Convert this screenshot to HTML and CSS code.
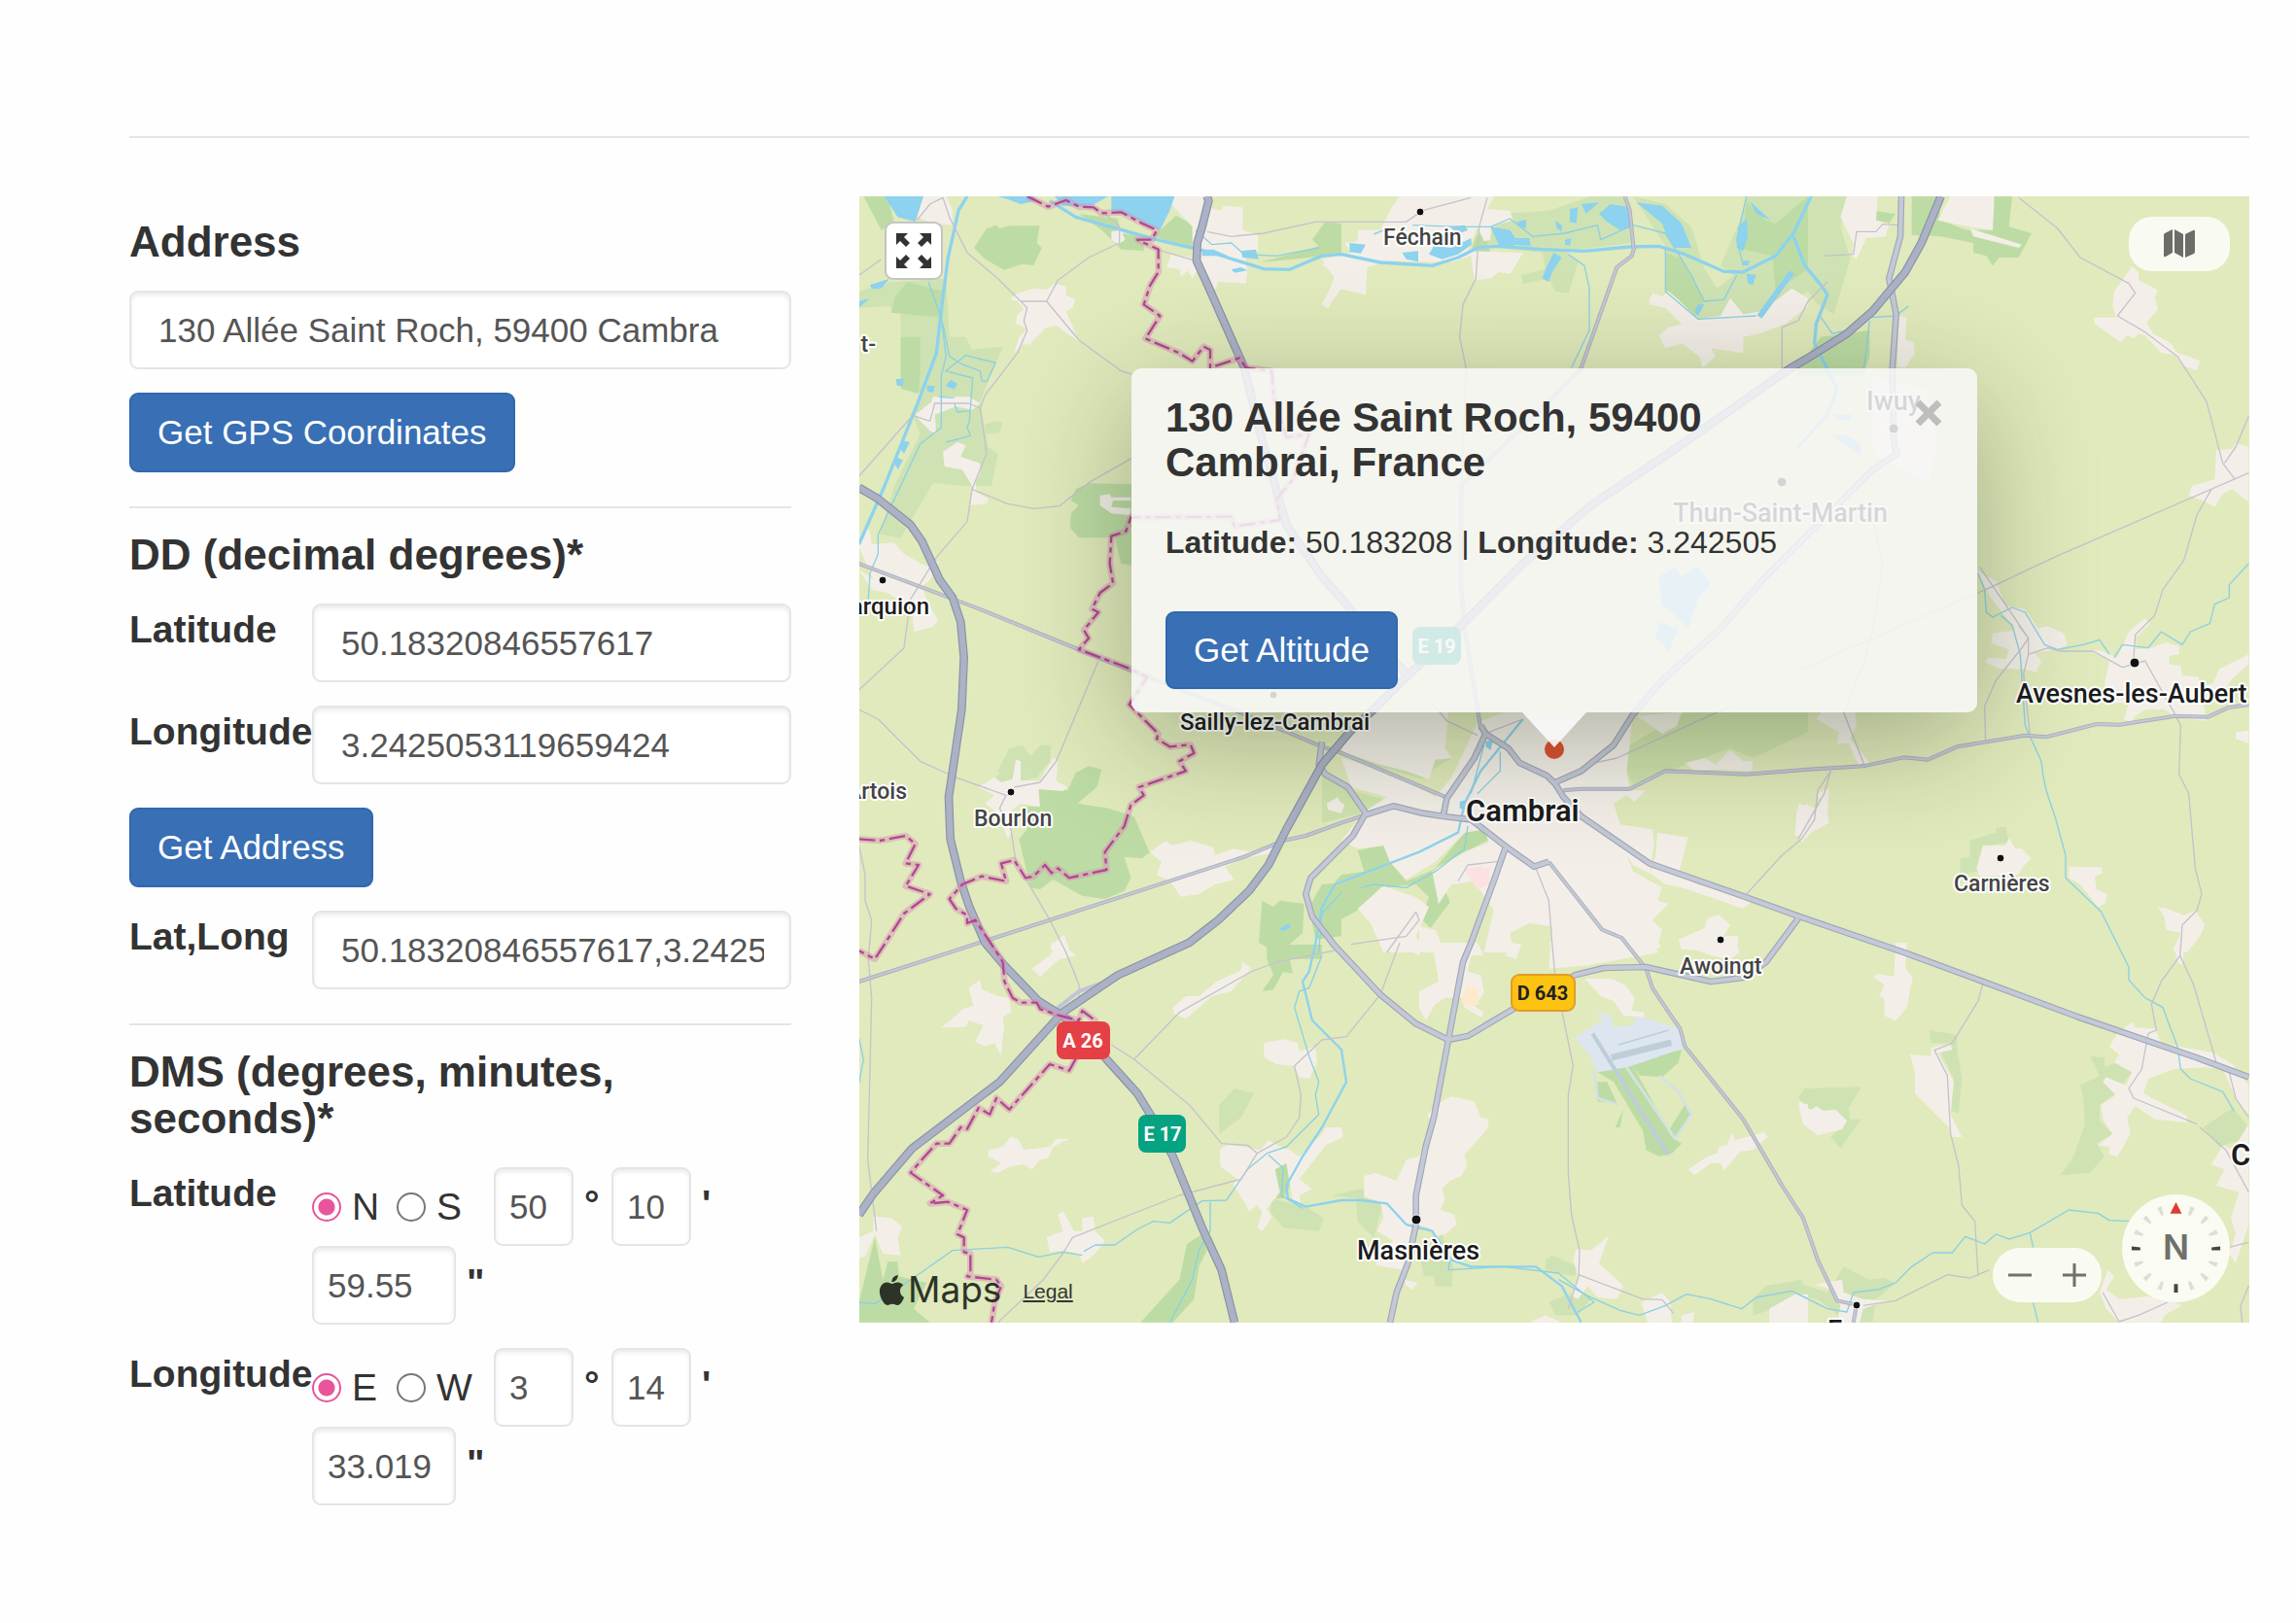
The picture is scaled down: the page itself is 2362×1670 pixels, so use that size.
FILE: index.html
```html
<!DOCTYPE html>
<html lang="en">
<head>
<meta charset="utf-8">
<title>GPS Coordinates</title>
<meta name="viewport" content="width=device-width, initial-scale=1">
<link rel="stylesheet" href="styles.css">
</head>
<body>
<main class="page">
  <hr class="rule">
  <div class="columns">
    <form class="panel">
      <section class="group">
        <h2 class="heading"><label for="address">Address</label></h2>
        <input class="field" id="address" type="text" value="130 Allée Saint Roch, 59400 Cambra">
        <button class="btn" type="button">Get GPS Coordinates</button>
      </section>
      <hr class="rule">
      <section class="group">
        <h2 class="heading">DD (decimal degrees)*</h2>
        <div class="row">
          <label class="name" for="latitude">Latitude</label>
          <input class="field" id="latitude" type="text" value="50.18320846557617">
        </div>
        <div class="row">
          <label class="name" for="longitude">Longitude</label>
          <input class="field" id="longitude" type="text" value="3.2425053119659424">
        </div>
        <button class="btn" type="button">Get Address</button>
        <div class="row">
          <label class="name" for="latlong">Lat,Long</label>
          <input class="field" id="latlong" type="text" value="50.18320846557617,3.2425">
        </div>
      </section>
      <hr class="rule">
      <section class="group">
        <h2 class="heading">DMS (degrees, minutes, seconds)*</h2>
        <div class="row">
          <label class="name" for="lat-deg">Latitude</label>
          <div class="dms">
            <label class="choice"><input class="radio" type="radio" name="ns" checked>N</label>
            <label class="choice"><input class="radio" type="radio" name="ns">S</label>
            <input class="field small" id="lat-deg" type="text" value="50"><label class="unit" for="lat-deg">°</label>
            <input class="field small" id="lat-min" type="text" value="10"><label class="unit" for="lat-min">'</label>
            <input class="field small seconds" id="lat-sec" type="text" value="59.55"><label class="unit" for="lat-sec">"</label>
          </div>
        </div>
        <div class="row">
          <label class="name" for="lon-deg">Longitude</label>
          <div class="dms">
            <label class="choice"><input class="radio" type="radio" name="ew" checked>E</label>
            <label class="choice"><input class="radio" type="radio" name="ew">W</label>
            <input class="field small" id="lon-deg" type="text" value="3"><label class="unit" for="lon-deg">°</label>
            <input class="field small" id="lon-min" type="text" value="14"><label class="unit" for="lon-min">'</label>
            <input class="field small seconds" id="lon-sec" type="text" value="33.019"><label class="unit" for="lon-sec">"</label>
          </div>
        </div>
      </section>
    </form>

    <div class="map">
      <svg class="tiles" viewBox="884 202 1430 1159" role="img" aria-label="Map of Cambrai and its surroundings">
        <g transform="translate(880 200) scale(.333333)">
          <!-- light woodland -->
          <g class="wood">
            <path d="M11 300L110 270 280 260 290 440 340 440 360 480 455 470 400 600 385 640 410 780 440 800 420 900 330 900 240 890 140 1060 75 1050 120 900 200 740 180 690 200 610 140 590 140 370 100 345 11 350zM400 710L430 700 455 705 445 735 405 740z"/>
            <g transform="translate(1440 0)"><path d="M500 160L560 60 700 50 830 6 940 6 960 150 750 175 790 210 760 305 720 300 700 260 620 275 615 250 690 230 680 180zM960 6L1060 30 1140 100 1180 230 1220 290 1270 250 1230 220 1290 80 1310 6 1500 6 1500 300 1350 380 1230 375 1160 390 1060 300 1060 160z"/></g>
            <g transform="translate(2910 0)"><path d="M0 6H150L130 100 160 200 110 370 60 340 0 260z"/></g>
            <g transform="translate(0 1140)"><path d="M440 640L475 570 515 560 540 595 570 560 605 560 600 610 560 660 470 680zM430 660L470 630 490 670 440 680z"/></g>
            <g transform="translate(2910 1140)"><path d="M500 910L530 905 530 855 610 830 610 815 640 812 650 860 580 870 550 950 500 960z"/></g>
            <g transform="translate(0 2310)"><path d="M1123 502L1170 450 1230 465 1190 540 1123 590zM1285 790L1400 820 1445 850 1430 890 1320 880 1280 830z"/></g>
            <g transform="translate(1440 2310)"><path d="M30 780L120 760 190 800 160 910 110 860 105 790zM300 960L370 900 405 1000 400 1062 350 1060 345 1030 315 1030zM690 980L710 965 790 1000 780 1030 690 1010zM700 1110L800 1070 830 1100 790 1150 720 1150zM1330 1100L1370 1060 1480 1040 1500 1100 1330 1150z"/></g>
            <g transform="translate(2910 2310)"><path d="M0 480L20 450 195 445 155 510 160 545 195 545 130 635 100 600 150 550 110 515 40 520zM405 270L490 285 490 330 505 420 495 525 470 520 480 420 440 340 470 310 410 310zM900 350L945 355 945 385 980 370 1030 400 1000 435 950 420 980 465 930 500 930 550 970 590 920 620 945 660 900 710 810 718 850 660 885 560 880 480 870 440 930 410zM1250 570L1340 510 1390 570 1390 600 1300 630zM0 1050L90 1080 140 1000 220 1040 265 1035 300 1050 240 1100 230 1170 150 1172 60 1100 0 1090z"/></g>
          </g>
          <!-- dense forest -->
          <g class="forest">
            <path d="M25 6H100L120 90 80 110zM405 105L435 95 445 105 480 97 568 97 560 150 575 165 550 220 515 215 460 233 400 200 366 165zM120 320L160 270 275 300 270 380 110 365zM140 440H200V550L195 615 140 600zM690 60L810 75 820 120 890 130 890 175 820 170 760 110zM990 65L1060 105 1060 170 920 130zM680 910L720 892 852 895 852 1145 820 1140 800 1060 690 1060 663 1030 665 985 690 960 665 945zM1410 140L1450 85 1500 90 1500 185 1250 210 1430 160z"/>
            <g transform="translate(1440 0)"><path d="M1300 120L1310 20 1370 80 1400 90 1500 6 1500 230 1400 300 1390 190 1300 170zM1060 180L1110 200 1180 330 1150 380 1060 290zM475 130L500 110 520 180 460 175z"/></g>
            <g transform="translate(2910 0)"><path d="M350 6H430L440 80 520 110 600 110 600 6H660L650 100 720 120 680 195 620 195 600 220 580 190 540 180 540 150 440 130 350 125zM230 50L300 60 280 90 235 80zM0 530L70 440 220 420 220 500 200 560 0 560z"/></g>
            <g transform="translate(0 1140)"><path d="M566 697L655 700 680 645 720 625 760 635 745 690 685 740 780 755 860 780 908 892 885 910 830 905 850 970 830 1010 770 1035 700 1025 610 975 570 1005 540 1000 505 850 530 820 520 750 565 750zM1255 1040L1290 1060 1310 1040 1385 1050 1380 1140 1300 1210 1280 1190 1245 1170zM1440 990L1500 985 1500 1150 1420 1160 1400 1060z"/></g>
            <g transform="translate(1440 1140)"><path d="M110 885L190 870 210 920 260 980 345 945 440 830 500 820 520 850 440 890 350 940 395 1045 335 1125 305 1095 330 1030 290 990 180 1000 110 1070 0 1130 0 1030 60 960 130 950zM640 850L660 800 690 797 715 830 740 845 720 870 735 890 695 915 650 880z"/><path d="M90 540L190 458 330 458 320 580 400 600 350 630 310 665 90 600zM780 500L880 460 860 510 830 525zM0 650L60 690 90 700 200 730 120 770 0 800zM950 560L1120 458 1500 458 1500 520 1330 600 1260 570 1120 620 1050 650 960 680 940 640z" class="faint"/></g>
            <g transform="translate(0 2310)"><path d="M1270 6L1440 6 1440 50 1340 50 1350 95 1320 90 1290 145 1255 150 1290 100 1270 50zM1023 930L1070 900 1085 950 1060 1000 1045 1100 980 1172 880 1172 1000 1040zM60 910L85 1040 100 985 130 985 135 1030 220 1050 180 1130 230 1172 11 1172 11 1110zM1295 700L1330 680 1360 720 1320 790 1300 790z"/></g>
            <g transform="translate(1440 2310)"><path d="M890 390L1110 330 1100 370 1050 415 980 410 960 380 1080 600 1110 620 1080 650 1040 660 1000 640 990 580 900 430 850 400zM850 430L880 430 910 495 850 490zM1120 500L1140 530 1090 600 1070 580zM905 570L930 515 920 570z"/></g>
          </g>
          <!-- built-up areas -->
          <g class="town">
            <path d="M190 6H280L300 50 300 95 240 90 190 70zM500 330L480 325 490 310 550 290 590 295 615 275 650 285 650 310 678 325 670 350 650 360 685 440 690 455 620 405 590 410 545 455 540 465 520 460 490 490 505 440 530 415 495 400 500 370 520 355zM985 6H1075L1085 40 1130 50 1135 35 1195 40 1195 110 1243 125 1243 175 1200 170 1210 235 1205 275 1120 270 1110 295 1060 220 1040 260 1025 235 1005 255 1000 230 960 225 975 185 1040 195 1040 100 975 30zM790 115L820 110 832 140 810 155 790 140zM1440 200L1500 185 1500 290 1455 350 1440 340 1480 260zM185 680L235 640 240 625 350 625 385 645 360 665 310 655 245 680 250 740 230 730 200 700zM270 795L315 765 340 775 325 810 385 830 385 860 370 890 375 920 410 940 405 955 355 960 360 900 330 850 275 840zM11 1090L30 1030 45 1040 50 1080 120 1075 150 1110 220 1150 260 1130 230 1190 180 1230 60 1200zM755 930L785 925 790 935 850 935 850 945 795 945 790 965 850 970 845 990 790 985 755 960z"/>
            <g transform="translate(1440 0)"><path d="M215 40L240 6 530 6 510 45 580 50 590 80 520 100 520 140 500 145 480 100 450 175 620 180 600 215 580 245 545 240 520 260 470 265 460 190 400 210 200 205 170 215 140 225 135 310 50 290 20 350 5 345 40 250 0 215 90 180 70 150 110 145 110 110 180 110zM1010 325L1020 305 1050 315 1070 300 1100 325 1160 385 1230 375 1260 320 1300 370 1360 360 1450 290 1500 320 1500 345 1430 400 1350 430 1300 440 1300 490 1200 475 1215 500 1175 535 1165 500 1110 460 1060 475 1040 435 1070 410 1110 400 1060 350 1010 340z"/></g>
            <g transform="translate(2910 0)"><path d="M150 6H245L240 80 280 90 270 130 210 135 180 200 165 190 170 150 130 70zM430 80L470 6 605 6 600 110 530 100 480 90zM530 105L690 155 680 165 540 130zM310 375L335 380 330 450 355 455 360 490 330 535 305 530zM975 300L1000 265 1030 222 1050 240 1050 265 1110 295 1100 320 1110 355 1075 395 1095 430 1150 460 1170 490 1205 500 1240 515 1230 543 1190 530 1160 495 1120 490 1070 435 1050 430 1035 445 1015 435 995 457 915 400 912 380 980 380 970 340zM1290 790L1340 785 1350 768 1390 780 1390 950 1340 910 1310 925 1285 965 1250 945 1205 930 1215 900 1285 880zM0 6z"/></g>
            <path d="M3140 560L3300 600 3340 760 3310 890 3230 850 3140 800z"/>
            <g transform="translate(0 1140)"><path d="M11 20L60 50 100 20 200 0 230 10 200 60 220 110 255 175 240 195 180 210 175 140 100 90 50 80zM380 690L430 660 450 675 485 665 495 605 510 610 510 670 570 670 610 598 625 610 620 670 655 690 640 702 565 695 570 750 510 740 470 770 480 830 470 850 440 770 400 740 430 715zM908 890L960 855 975 870 1035 855 1105 875 1110 900 1165 880 1225 890 1290 870 1280 895 1200 910 1140 935 1170 975 1110 990 1060 1020 1005 1028 970 980 930 960 945 920zM1455 740L1490 720 1500 770 1460 760zM600 1180L645 1145 660 1200 610 1200z"/></g>
            <g transform="translate(1440 1140)"><path d="M140 458L390 458 380 570 400 600 350 605 330 665 260 640 180 620 90 590 60 580 80 530zM480 490L560 460 960 458 940 640 950 700 1000 700 965 735 940 715 900 740 920 805 1020 820 1025 860 1010 960 1030 900 1035 830 1130 845 1100 960 1160 990 1310 1030 1330 1040 1300 1065 1200 1030 1110 1000 1060 990 1020 960 960 930 940 900 960 950 1050 1000 1035 1040 1070 1050 1020 1100 1050 1130 1030 1190 1040 1200 820 1240 700 1250 710 1120 640 1110 580 1140 590 1200 500 1200 530 1070 470 980 400 990 360 1050 340 950 440 890 515 860 500 820 440 830 350 920 260 975 210 920 190 870 110 880 60 855 110 790 140 760 200 720 90 690 60 600 200 640 350 720 400 660zM970 470L1110 458 1095 500 1050 525 1000 490zM1120 615L1180 600 1215 620 1260 575 1300 610 1330 610 1325 640 1200 635 1150 640zM15 745L45 725 70 745 60 770 20 760zM110 1065L190 995 290 1030 330 1060 290 1150 320 1200 190 1200 150 1110zM300 1120L350 1130 380 1200 300 1200zM1465 760L1500 740 1500 840 1460 840zM1100 1160L1180 1125 1190 1095 1225 1083 1260 1115 1240 1150 1285 1150 1280 1200 1110 1190z"/></g>
            <g transform="translate(2910 1140)"><path d="M550 20L610 55 640 130 700 140 740 200 770 193 820 215 830 250 800 265 730 275 750 300 735 335 690 325 620 325 580 305 585 290 640 295 650 265 595 245 600 215 670 205 590 100zM55 480L70 458 175 458 180 500 160 540 220 615 185 620 155 555 120 555 125 520zM945 370L960 300 895 265 940 270 985 290 1020 210 1070 168 1085 185 1040 230 1045 265 1090 260 1135 243 1175 255 1175 280 1145 285 1145 310 1180 315 1185 345 1235 350 1240 380 1280 370 1300 325 1390 280 1390 310 1340 355 1310 400 1250 430 1260 485 1170 475 1130 450 1070 450 1040 470 1025 490 1005 480 1020 430 960 430zM55 710L95 695 90 770 95 800 40 830 10 860 0 840V740L60 755 70 730zM550 940L570 870 640 870 650 847 670 880 690 880 718 910 690 940 680 960 560 965zM835 935L935 937 940 955 915 965 920 1005 955 1020 945 1050 925 1060 870 990 835 970zM1110 1060L1140 1065 1190 1085 1225 1070 1255 1115 1240 1150 1200 1200 1155 1195 1180 1140 1135 1130 1130 1090zM1350 520L1390 515 1390 555 1350 540z"/></g>
            <g transform="translate(0 2310)"><path d="M545 80L600 40 620 10 600 0 655 0 660 25 685 40 630 50 570 105zM350 140L385 115 390 145 440 165 475 170 480 215 455 230 460 260 455 290 450 350 430 310 400 320 370 305 395 255 350 240 340 260 265 262 310 225 330 205 365 195zM980 200L1020 165 1060 165 1115 120 1190 85 1195 60 1222 78 1160 150 1100 165 1060 200 1020 235 985 220zM1260 310L1325 298 1365 310 1370 335 1420 320 1425 370 1400 420 1370 415 1355 380 1300 375 1262 355zM410 640L455 630 480 598 505 610 520 640 600 630 620 605 660 605 610 630 595 665 570 670 545 700 520 685 480 690 440 710 415 705 450 680 410 660zM1125 640L1145 625 1200 630 1250 640 1275 610 1300 625 1340 640 1370 660 1440 590 1450 570 1500 570 1500 600 1455 620 1370 730 1410 760 1370 780 1375 805 1350 800 1340 740 1330 680 1295 700 1310 770 1270 820 1285 850 1255 890 1240 880 1255 830 1240 810 1215 830 1200 800 1165 745 1180 730 1125 690zM590 910L640 890 625 840 640 828 675 890 700 890 700 850 735 845 740 890 770 920 740 960 700 990 690 960 640 950 600 955zM11 910L55 890 55 845 110 850 145 875 130 910 140 965 85 960 60 900 30 970 11 975z"/></g>
            <g transform="translate(1440 2310)"><path d="M230 0H310L300 40zM340 0H480L500 40 460 40 450 90 490 100 500 155 470 195 500 215 490 230 440 200 430 170 380 170 350 190 320 240 300 200 300 150 360 120zM565 40L585 0 615 5 600 50zM700 0H790L780 40 730 30zM940 0H1040L1045 15 980 35zM1100 0L1280 10 1290 30 1260 50 1200 40zM810 110L890 110 935 130 965 170 955 210 995 215 995 230 930 225 900 180 860 165zM370 490L400 475 470 490 490 540 515 545 510 575 470 620 440 655 448 690 430 720 395 735 370 760 380 790 365 825 410 840 415 870 380 900 350 905 330 880 290 870 250 1010 165 995 180 960 220 920 170 890 190 850 180 800 130 785 130 720 165 710 230 735 260 670 300 660 340 560 325 530zM255 1040L295 1050 280 1070 260 1060zM1130 700L1190 660 1220 650 1225 630 1250 625 1265 585 1275 610 1365 585 1375 600 1330 640 1290 645 1240 705 1230 680 1200 680 1150 718zM785 945L830 950 885 905 855 990 900 1030 930 1060 910 1100 850 1095 820 1060 790 1100 770 1090 790 1030 775 980zM985 1110L1050 1080 1075 1110 1080 1172 1005 1172zM640 1172L690 1150 740 1172zM1380 1130L1460 1085 1500 1085 1500 1172 1380 1172zM1470 490L1500 500V560zM1110 1150L1150 1140 1145 1172H1110zM0 590L60 570 65 600 0 630z"/></g>
            <g transform="translate(2910 2310)"><path d="M300 0H335L330 80 353 105 335 200 300 242 265 225 265 170 250 165 265 130 230 105 245 97 295 105zM345 345L410 350 410 325 470 312 475 330 430 340 480 430 470 530 505 600 475 600 465 570 360 465 360 400zM0 500L40 515 55 505 80 520 115 515 150 550 135 575 60 595 15 560zM960 320L985 280 1030 245 1040 262 1100 265 1120 310 1280 340 1340 375 1390 440 1390 530 1350 480 1310 390 1250 385 1160 390 1080 420 1065 465 1200 535 1200 555 1100 545 1040 505 1015 540 1025 590 985 660 960 655 960 630 925 625 970 590 940 545 935 500 980 470 940 430 950 415 1010 440 1030 400 975 370 990 345zM1275 685L1310 625 1340 640 1390 560 1390 870 1350 990 1330 960 1350 900 1335 850 1360 770 1290 750 1315 700zM1160 15L1185 0 1215 0 1190 30 1185 70 1170 60zM930 1080L955 1010 975 1030 950 1070 990 1100 1100 1090 1185 1120 1130 1150 1120 1172H990L950 1130zM50 1055L135 1040 140 1080 200 1100 275 1105 200 1130 190 1172H120L130 1120 100 1070zM0 1090L30 1110 20 1172H0z"/></g>
          </g>
          <path class="ward" d="M1880 2085L1910 2075 1960 2080 1955 2130 1920 2145 1900 2115z"/>
          <path class="ward warm" d="M1885 2445L1920 2450 1925 2500 1890 2510 1870 2490z"/>
          <!-- airfield -->
          <g transform="translate(1440 2310)">
            <path class="apron" d="M780 295L830 260 870 240 840 210 890 225 900 260 960 255 970 225 1100 265 1115 325 1000 365 940 385 850 400 830 350z"/>
            <path class="strip" d="M840 390L850 480 915 500M1040 410L1100 460 1140 530 1090 605 940 385"/>
            <path class="runway" d="M893 355L1078 308" stroke-width="20"/>
            <path class="runway" d="M835 280L1068 655" stroke-width="12"/>
            <path class="runway" d="M915 315L1070 270" stroke-width="4"/>
          </g>
          <!-- lakes -->
          <g class="lake">
            <path d="M110 6H210L185 85 130 70 90 6zM45 280L105 260 80 290 50 292zM11 330L45 320 11 350zM125 570L150 570 145 592 128 590zM220 590L245 592 240 612 222 608zM278 590L295 572 315 585 305 602zM145 760L168 765 150 800 138 785zM128 812L146 820 132 850 120 830zM440 6H550L560 20 510 30 470 15zM615 6H780L720 40 640 35zM790 6H985L970 50 940 110 850 70 790 50zM1070 170L1105 170 1150 190 1070 190zM1190 175L1235 170 1245 200 1195 195zM1160 232L1190 225 1210 235 1170 242z"/>
            <g transform="translate(1440 0)"><path d="M85 150L135 155 120 182 85 178zM160 120L180 112 210 104 160 126zM395 100L440 95 450 110 420 122zM370 200L330 185 345 160 400 165 460 135 462 155 420 185zM247 180L297 175 297 208 260 200zM520 100L580 110 600 140 590 160 545 155zM600 85L630 78 630 105 610 100zM590 135L640 135 645 160 590 155zM720 80L740 95 740 115 725 105zM765 45L790 40 785 90 765 85zM800 30L855 25 815 60zM855 60L890 30 950 40 960 100 920 110 880 85zM970 25L1050 35 1110 90 1140 165 1090 165 1065 130 1050 90zM690 230L715 180 740 195 710 240 700 270 680 260zM750 140L770 135 765 158 750 155zM1285 100L1310 75 1315 130 1300 175 1280 165zM1320 20L1385 80 1340 60zM1310 245L1340 248 1330 280 1315 275zM1300 205L1320 205 1315 220 1298 218zM1160 340L1180 340 1160 375 1150 360z"/></g>
            <path d="M3020 680H3075L3065 697 3030 693zM3010 740L3060 745 3100 770 3105 810 3080 790zM2480 1180L2530 1150 2550 1180 2600 1150 2640 1200 2600 1250 2570 1340 2530 1300 2490 1270zM2480 1320L2540 1340 2510 1410 2470 1370zM1310 2265L1340 2250 1343 2265 1315 2275zM1945 1690L1970 1680 1960 1715 1945 1705zM1865 1875L1880 1870 1880 1900 1865 1895z"/>
          </g>
          <!-- rivers and streams -->
          <g class="river">
            <path d="M345 6L318 50 285 200 260 400 250 490 190 650 90 900 11 1080"/>
            <path d="M600 20L680 70 930 140 1100 180 1260 230 1340 232 1440 190 1500 185 1620 210 1780 220 1860 195 1920 165 1980 160 2120 170 2250 175 2390 162 2480 160 2560 185 2680 238 2740 240 2840 190 2895 120 2950 6"/>
            <path d="M2895 130L2930 220 2980 280 3000 310 2965 400 2960 460 3030 600 3000 680 2910 780"/>
            <path d="M2790 378L2890 240" stroke-width="18"/>
          </g>
          <g class="canal">
            <path d="M2060 1620L1930 1780 1880 1880 1860 1970 1740 2030 1480 2130 1440 2200 1420 2310 1400 2400 1380 2430 1410 2550 1500 2640 1515 2740 1440 2880 1380 2970 1330 3060 1335 3100 1390 3125 1500 3105 1560 3105 1640 3115 1700 3180 1780 3200 1840 3290 1900 3310 2100 3310 2180 3370 2240 3482"/>
          </g>
          <g class="stream">
            <path d="M225 270L265 380 280 500 265 560 265 720 200 770 130 920 70 1050 70 1110 45 1170 40 1250"/>
            <path d="M270 400L290 500 330 525 385 545 390 575 405 578 433 520 340 497 278 545 362 567 352 700 345 720 355 745 280 765M258 625L305 628M305 645L315 672 355 668"/>
            <path d="M1050 110L1100 155 1160 150 1200 185 1300 190 1430 165M1720 95L1860 100 1960 100 2020 75 2090 130 2190 120 2290 95 2300 140 2400 95 2500 120 2580 250 2620 330 2680 325 2720 250M2500 170L2500 300 2600 385 2780 375M2200 185L2250 220 2265 290 2265 420 2210 535"/>
            <path d="M2740 220L2720 140 2750 6M3015 430L2980 380M3015 430L3060 420M3130 380L3210 375 3250 345M3130 390L3120 480 3110 550"/>
            <path d="M3465 1170L3485 1220 3490 1290 3510 1305 3570 1275 3610 1290 3670 1390 3710 1405 3790 1390 3840 1375 3870 1420M3885 1430L3910 1390 3990 1400 4030 1350 4095 1390 4120 1350 4180 1325 4195 1265 4240 1245 4240 1205 4300 1140"/>
            <path d="M3535 1300L3570 1330 3595 1420 3610 1640 3660 1750 3665 1790 3675 1840 3705 1930 3735 2040 3735 2110 3845 2215 3930 2385 3930 2425 3980 2480 4035 2510 4080 2630 4090 2700 4120 2730 4220 2770 4255 2830"/>
            <path d="M2910 3395L3000 3440 3060 3450 3080 3390 3160 3380 3210 3360 3260 3310 3325 3267 3385 3267 3425 3217 3485 3240 3520 3210 3560 3225 3625 3205 3745 3135 3835 3145 3870 3167 3935 3170M3625 3205L3635 3250M3635 3422L3650 3482"/>
            <path d="M2170 3350L2260 3400 2360 3445 2420 3460 2500 3430 2565 3395 2640 3410 2735 3440 2780 3405 2890 3385 2940 3410M1835 3290L1830 3320 2000 3310 2170 3330 2280 3420 2230 3450"/>
            <path d="M1500 2155L1440 2220 1430 2340M1560 2140L1600 2130 1700 2140 1790 2090 1880 2020 1890 1950M1990 1720L1990 1780 1920 1850M1940 1700L1900 1850"/>
            <path d="M11 3420L60 3425 200 3330 300 3260 470 3250 565 3280 640 3265 700 3275M705 3263L740 3243 800 3243 870 3195 920 3170 970 3175 1070 3107 1145 3105 1210 3010 1270 2960 1330 2940 1430 2840 1420 2780 1430 2740 1400 2660 1370 2560 1355 2510 1370 2460 1400 2450 1440 2350M1095 3110L1095 3200 1060 3260 1040 3350 970 3482M1275 2965L1320 3005 1315 3090 1380 3130M11 2605L25 2670 11 2745"/>
          </g>
          <!-- minor roads -->
          <g class="lane">
            <path d="M11 250L80 200M190 80L230 30 270 10 290 70 345 180 440 260 510 330 590 330 690 450 820 545 852 555M590 330L625 265 720 195 815 150 815 100 760 50M510 330L530 350 520 390 530 420 500 490 400 620 385 660 405 800 360 910 470 955 550 970 630 962 720 890 852 815M360 910L345 1010 250 1120 170 1250 150 1400 11 1530M170 680L230 700 245 645 350 645 385 660M170 690L11 870"/>
            <path d="M930 170L1050 205M1085 115L1160 130 1260 120 1420 85 1700 85 1750 50 1900 10M1950 10L1925 100 1915 260 1875 340 1865 440 1885 540 1870 900"/>
            <path d="M11 1590L70 1620 200 1750 310 1800 465 1855 445 1895 480 1960 495 2060 600 2240 650 2340 690 2440 690 2500M750 1440L620 1750 570 1815 490 1830M11 2010L30 2100 30 2180 50 2240 40 2360 50 2480 45 2700 38 2980 65 3200"/>
            <path d="M1500 2330L1300 2370 1220 2400 1000 2525 860 2670M790 2625L860 2670 1030 2810 1130 2930 1210 2935 1240 2960 1190 3040 1000 3090 670 3220 640 3270 580 3350 440 3482M1240 2960L1330 2910 1370 2850 1375 2780 1355 2690 1440 2610 1515 2600 1620 2470 1680 2310M1640 2340L1730 2215 1740 2240 1700 2290 1530 2315M1860 2120L1890 2070 1980 2060M2100 2080L2140 2180 2150 2310 2160 2420 2215 2690 2200 2780 2200 3020 2210 3150 2235 3260 2232 3340 2200 3440M2232 3335L2430 3410 2490 3412 2525 3455"/>
            <path d="M1780 1570L1825 1625 1920 1670M1955 1660L2060 1620M2750 2160L2860 2040 2920 1990 2960 1930 2970 1840 3010 1780M2280 1755L2350 1740 2700 1580"/>
            <path d="M3590 10L3710 105 3780 195 3930 275 3950 305 3895 375 3980 425 4080 500 4170 640 4220 830 4258 880M4300 860L3700 1120 3510 1210 2910 1470M4225 830L4260 780 4300 685M4185 910L4140 990 4100 1130 4035 1220 4010 1300 3950 1360 3945 1430M2990 190L3080 185 3090 115 3150 115 3170 92 3220 95M3000 270L2940 330 2910 390 2860 410 2860 540"/>
            <path d="M3470 1150L3620 1370 3620 1420 3680 1400 3720 1410 3820 1410 3910 1460 3980 1440 4070 1600 4090 1640 4085 1790 4115 1850 4135 2080 4155 2160 4140 2210 4095 2255 4088 2350 4030 2430 4000 2500 4015 2580 3990 2590 3970 2700 3930 2760 3945 2790 4140 2870M4088 2350L4130 2440 4200 2680M3590 1330L3620 1370 3600 1400 3520 1500 3485 1580 3488 1690M3620 1420L3605 1480 3625 1670M3050 1600L3115 1765M3010 1780L2990 1850 2910 1990"/>
            <path d="M3480 2435L3465 2490 3385 2620 3330 2642 3370 2720 3380 2900 3405 3000 3415 3120 3455 3170 3465 3340M3110 3430L3210 3415 3370 3335 3440 3345 3500 3320M4150 2880L4230 2950 4300 3080M4240 2710L4260 2790 4300 2850M4240 3250L4300 3235M3850 3390L3900 3480 3960 3460 4050 3420M4300 3370L4275 3430 4280 3482M3140 1000L3170 1140 3140 1350 3110 1450 3050 1600"/>
          </g>
          <!-- main roads: casing under fill -->
          <g class="main">
            <g id="secondary">
              <path d="M11 1140L370 1275 690 1405 850 1470 1190 1600 1440 1705 1490 1720 1825 1862"/>
              <path d="M11 2430L260 2350 600 2240 1200 2045 1320 1995 1390 1980 1500 1940 1575 1915"/>
              <path d="M2185 1840L2240 1835H2390L2500 1780 2750 1790 2940 1775 3110 1765 3235 1738 3310 1745 3400 1705 3610 1670 3675 1675 3830 1635 3900 1637 4075 1610 4175 1613 4235 1585 4300 1575"/>
              <path d="M2140 2060L2305 2270 2365 2295 2440 2390 2460 2450 2510 2525 2545 2575 2560 2630 2740 2855 2860 3060 2925 3160 2970 3290 3030 3415 3090 3428 3080 3482"/>
              <path d="M2375 6L2390 50 2402 170 2396 190 2350 225 2240 535 2140 640 1870 900 1868 1200 1880 1340 1930 1650"/>
            </g>
            <use class="fill" href="#secondary"/>
          </g>
          <g class="main wide">
            <g id="primary">
              <path d="M3228 6L3225 130 3190 260 3212 370 3200 540 3205 770 3215 800 3140 850 2910 1080 2800 1190 2670 1340 2490 1500 2400 1605 2340 1700 2240 1780 2160 1815"/>
              <path d="M1945 1665L2015 1710 2050 1755 2135 1795 2160 1820 2185 1860 2240 1920 2450 2065 2750 2170 2910 2228 3250 2345 3480 2430 3770 2538 4140 2665 4300 2725"/>
              <path d="M1930 1640L1945 1665 1910 1740 1825 1865 1815 1915"/>
              <path d="M1575 1915L1660 1888 1750 1910 1815 1920 1900 1930 2010 2015 2095 2075 2140 2060"/>
              <path d="M1440 1690L1430 1760 1450 1790 1520 1830 1575 1910 1535 1980 1440 2075 1405 2110 1390 2160 1410 2230 1480 2320 1620 2470 1730 2560 1830 2610 1890 2598 2030 2515 2220 2410 2310 2388 2440 2385 2640 2430 2740 2418 2810 2370 2910 2235"/>
              <path d="M2005 2020L1970 2120 1900 2310 1875 2370 1830 2610 1785 2850 1760 2940 1730 3090V3180L1705 3300 1670 3390 1650 3482"/>
            </g>
            <use class="fill" href="#primary"/>
          </g>
          <g class="motorway">
            <path class="slip" d="M600 2530L690 2460 800 2420"/>
            <g id="motorways">
              <path d="M1085 6L1090 20 1070 100 1055 150 1053 205 1085 275 1180 490 1200 535 1250 740 1310 950 1330 1020 1440 1180 1520 1270 1560 1330 1705 1485"/>
              <path d="M11 905L70 940 170 1020 205 1070 260 1190 300 1245 325 1320 335 1430 328 1590 300 1780 288 1860 293 1990 325 2120 350 2195 400 2310 455 2375 565 2490 630 2530 700 2580 775 2670 870 2775 910 2840 980 2970 1070 3190 1130 3320 1170 3482"/>
              <path d="M11 3150L55 3085 175 2945 445 2740 640 2525 810 2410 1030 2310 1120 2240 1215 2150 1275 2070 1330 1960 1440 1760 1525 1660 1610 1580 1705 1485 1870 1330 2060 1140 2270 960 2510 800 2880 540 2940 505 3060 430 3140 360 3240 240 3290 150 3350 6"/>
            </g>
            <use class="fill" href="#motorways"/>
          </g>
          <!-- administrative boundary -->
          <g class="border">
            <g id="boundary">
              <path d="M530 6L595 38 650 18 690 38 735 40 760 58 820 55 890 92 930 110 915 140 870 140 935 170V240L910 280 890 340 940 375 895 445 1000 490 1040 515 1075 470 1095 480V535L1185 505 1205 535 1285 545 1290 620 1330 750 1400 740 1350 880 1300 940 1310 1005 1170 1025 1160 995 850 997 835 1040 790 1055 785 1140 795 1200 755 1230 730 1280 750 1290 705 1345 720 1370 690 1405 850 1465 900 1490 845 1575 935 1665 930 1680 970 1705 1020 1700 1035 1700 1045 1725 1000 1750 1020 1780 875 1830 890 1855 850 1885 830 1950 770 2030 775 2085 660 2110 625 2080 605 2095 585 2070 550 2105 525 2110 490 2055 450 2065 465 2120 390 2105 330 2130 290 2175 310 2205 345 2225V2250L370 2240 430 2330 455 2370 460 2430 485 2480 510 2495 560 2495 570 2515 630 2535 690 2550 700 2520 740 2550 690 2650 660 2705 600 2685 475 2825 435 2790 415 2840 380 2820 345 2885 325 2880 290 2930 250 2930 205 2980 170 3020 270 3090 230 3115 285 3110 345 3135 315 3210 335 3220V3265L355 3270V3330L345 3340 435 3350 450 3370 430 3420 420 3482"/>
              <path d="M11 1990L75 1995 155 1980 185 2005 155 2065 195 2070 155 2135 230 2160 150 2220 80 2330 60 2360 11 2335"/>
            </g>
            <use class="dash" href="#boundary"/>
          </g>
        </g>

        <!-- town markers -->
        <g class="dots">
          <circle cx="1461" cy="218" r="4"/><circle cx="908" cy="597" r="4"/><circle cx="1040" cy="815" r="4"/>
          <circle cx="1310" cy="715" r="4"/><circle cx="2058" cy="883" r="4"/><circle cx="1770" cy="967" r="4"/>
          <circle cx="2196" cy="682" r="5"/><circle cx="1457" cy="1255" r="5"/><circle cx="1910" cy="1343" r="4"/>
          <circle cx="1948" cy="441" r="5"/><circle cx="1833" cy="496" r="5"/>
        </g>
        <g class="places">
          <text x="1423" y="252">Féchain</text>
          <text x="1002" y="850">Bourlon</text>
          <text x="2010" y="917">Carnières</text>
          <text x="1728" y="1002">Awoingt</text>
          <text x="901" y="362" text-anchor="end">t-</text>
          <text x="933" y="822" text-anchor="end">Artois</text>
          <g class="strong">
            <text x="956" y="632" text-anchor="end">arquion</text>
            <text x="1214" y="751">Sailly-lez-Cambrai</text>
          </g>
          <g class="big">
            <text x="1920" y="422">Iwuy</text>
            <text x="1721" y="537">Thun-Saint-Martin</text>
            <text x="1396" y="1296">Masnières</text>
            <text x="2074" y="723">Avesnes-les-Aubert</text>
            <text x="1880" y="1378">E</text>
          </g>
          <g class="city">
            <text x="1508" y="845">Cambrai</text>
            <text x="2295" y="1199">C</text>
          </g>
        </g>
        <g class="shields">
          <rect x="1087" y="1051" width="55" height="39" rx="8" fill="#e54045"/><text x="1114" y="1078">A 26</text>
          <rect x="1171" y="1147" width="49" height="39" rx="8" fill="#05a381"/><text x="1196" y="1174">E 17</text>
          <rect x="1453" y="645" width="50" height="39" rx="8" fill="#05a381"/><text x="1478" y="672">E 19</text>
          <rect x="1555" y="1003" width="65" height="37" rx="8" fill="#fdc312" stroke="#e29c2c" stroke-width="2"/><text class="dark" x="1587" y="1029">D 643</text>
        </g>
        <circle cx="1599" cy="771" r="10" fill="#dc5234"/>
      </svg>

      <section class="popup">
        <button class="close" type="button" aria-label="Close">
          <svg viewBox="0 0 28 28"><path d="M3 3L25 25M25 3L3 25"/></svg>
        </button>
        <h3 class="place">130 Allée Saint Roch, 59400 Cambrai, France</h3>
        <p class="coords"><b>Latitude:</b> 50.183208 | <b>Longitude:</b> 3.242505</p>
        <button class="btn" type="button">Get Altitude</button>
      </section>

      <button class="expand" type="button" aria-label="Full screen">
        <svg viewBox="0 0 36 36"><path d="M0 0H12L8 4 14 10 10 14 4 8 0 12zM36 0V12L32 8 26 14 22 10 28 4 24 0zM0 36V24L4 28 10 22 14 26 8 32 12 36zM36 36H24L28 32 22 26 26 22 32 28 36 24z"/></svg>
      </button>
      <button class="kind" type="button" aria-label="Map type">
        <svg viewBox="0 0 32 30"><path d="M0 6Q0 5 1 4L9 0V24L2 28Q0 29 0 27zM11 0L20 5V29L11 24zM22 5L30 1Q32 0 32 2V23Q32 24 31 25L22 29z"/></svg>
      </button>
      <div class="credit">
        <svg class="apple" viewBox="0 0 24 24" aria-hidden="true"><path d="M12.152 6.896c-.948 0-2.415-1.078-3.96-1.04-2.04.027-3.91 1.183-4.961 3.014-2.117 3.675-.546 9.103 1.519 12.09 1.013 1.454 2.208 3.09 3.792 3.039 1.52-.065 2.09-.987 3.935-.987 1.831 0 2.35.987 3.96.948 1.637-.026 2.676-1.48 3.676-2.948 1.156-1.688 1.636-3.325 1.662-3.415-.039-.013-3.182-1.221-3.22-4.857-.026-3.04 2.48-4.494 2.597-4.559-1.429-2.09-3.623-2.324-4.39-2.376-2-.156-3.675 1.09-4.61 1.09zM15.53 3.83c.843-1.012 1.4-2.427 1.245-3.83-1.207.052-2.662.805-3.532 1.818-.78.896-1.454 2.338-1.273 3.714 1.338.104 2.715-.688 3.559-1.701"/></svg>
        <span class="brand">Maps</span>
        <a class="legal" href="#legal">Legal</a>
      </div>
      <div class="controls">
        <div class="zoom">
          <button type="button" aria-label="Zoom out"><svg viewBox="0 0 24 24"><path d="M0 12H24"/></svg></button>
          <button type="button" aria-label="Zoom in"><svg viewBox="0 0 24 24"><path d="M0 12H24M12 0V24"/></svg></button>
        </div>
        <button class="compass" type="button" aria-label="Compass">
          <svg viewBox="-56 -56 112 112">
            <path d="M0 -48L6 -36H-6z" fill="#e0392f"/>
            <g id="quarter" fill="#dcddd6">
              <path d="M-2 -46H2L1 -37H-1z" transform="rotate(22) scale(1.2 1)"/>
              <path d="M-2 -46H2L1 -37H-1z" transform="rotate(45) scale(1.2 1)"/>
              <path d="M-2 -46H2L1 -37H-1z" transform="rotate(68) scale(1.2 1)"/>
            </g>
            <use href="#quarter" transform="rotate(90)"/><use href="#quarter" transform="rotate(180)"/><use href="#quarter" transform="rotate(270)"/>
            <path d="M46 -2V2L37 2V-1zM-46 -2V2L-37 2V-1zM-2 46H2V37H-2z" fill="#44453f"/>
            <text x="0" y="12">N</text>
          </svg>
        </button>
      </div>
    </div>
  </div>
</main>
</body>
</html>
```
FILE: styles.css
```css
* { box-sizing: border-box; }

body {
  margin: 0;
  background: #fefefe;
  color: #333;
  font-family: "Liberation Sans", Arial, sans-serif;
}

button, input { font: inherit; margin: 0; }

.page { padding: 140px 48px 80px 133px; }

.rule {
  height: 2px;
  margin: 0;
  border: 0;
  background: #e5e5e5;
}

.columns {
  display: grid;
  grid-template-columns: minmax(0, 681fr) minmax(0, 1430fr);
  gap: 70px;
  align-items: start;
  padding-top: 60px;
}

/* Form */
.panel .rule { margin: 35px 0 24px; }
.panel { padding-top: 23px; }

.group {
  display: flex;
  flex-direction: column;
  align-items: flex-start;
  gap: 24px;
}

.heading {
  margin: 0 0 2px;
  font-size: 44px;
  line-height: 48px;
}

.field {
  width: 100%;
  height: 81px;
  padding: 0 26px 0 28px;
  border: 2px solid #e5e5e5;
  border-radius: 9px;
  background: #fff;
  box-shadow: inset 0 3px 4px rgba(0, 0, 0, .08);
  color: #555;
  font-size: 35px;
}

.btn {
  height: 82px;
  padding: 0 27px;
  border: 2px solid #3168ad;
  border-radius: 9px;
  background: #386fb5;
  color: #fff;
  font-size: 35px;
}

.row {
  display: grid;
  grid-template-columns: 188px minmax(0, 1fr);
  width: 100%;
}

.name {
  padding-top: 6px;
  font-size: 39px;
  font-weight: bold;
  line-height: 42px;
  white-space: nowrap;
}

.dms {
  display: flex;
  flex-wrap: wrap;
  align-items: center;
}

.choice {
  display: flex;
  align-items: center;
  gap: 11px;
  width: 87px;
  font-size: 39px;
}

.choice + .choice { width: 100px; }

.radio {
  appearance: none;
  flex: none;
  width: 30px;
  height: 30px;
  border: 2px solid #777;
  border-radius: 50%;
  background: #fff;
}

.radio:checked {
  border-color: #e8559b;
  background: radial-gradient(circle, #e8559b 8px, #fff 9px);
}

.small { width: 82px; padding: 0 12px 0 14px; }
.seconds { width: 148px; }

.unit {
  width: 39px;
  padding: 0 0 6px 11px;
  font-size: 39px;
  font-weight: bold;
}

/* Map */
.map {
  position: relative;
  overflow: hidden;
  background: #e0eabc;
}

.tiles { display: block; width: 100%; height: auto; }

.wood { fill: #cfe2b3; }
.forest { fill: #bddca5; }
.town { fill: #f3efe8; }
.faint { fill: #cfe3ae; }
.ward { fill: #fbe1df; }
.warm { fill: #fdeacd; }
.lake { fill: #8dd2ee; }
.river, .canal, .stream, .lane, .main, .motorway, .border, .strip, .runway { fill: none; stroke-linejoin: round; }
.river { stroke: #8dd2ee; stroke-width: 10; }
.canal { stroke: #8dd2ee; stroke-width: 7; }
.stream { stroke: #8bd0e2; stroke-width: 4; }
.lane { stroke: #c5c2cd; stroke-width: 4; }
.apron { fill: #dde6f0; }
.strip { stroke: #d3e2e6; stroke-width: 8; }
.runway { stroke: #bfcdd8; }
.main { stroke: #aaadbc; stroke-width: 12; }
.main .fill { stroke: #c3c8d2; stroke-width: 7; }
.wide { stroke: #a2a6b8; stroke-width: 20; }
.wide .fill { stroke: #c4c9d7; stroke-width: 13; }
.motorway { stroke: #8a92a7; stroke-width: 26; }
.motorway .fill { stroke: #abb2c5; stroke-width: 19; }
.motorway .slip { stroke: #c0c4d4; stroke-width: 12; }
.border { stroke: rgba(214, 140, 180, .45); stroke-width: 20; }
.border .dash { stroke: #b0488f; stroke-width: 7; stroke-dasharray: 50 14 16 14; }

.dots { fill: #111; stroke: #fff; stroke-width: 1px; }

.places, .shields { font-family: Roboto, sans-serif; }

.places {
  fill: #444;
  stroke: #fff;
  stroke-width: 4px;
  stroke-linejoin: round;
  paint-order: stroke;
  font-size: 23px;
  font-weight: 500;
}

.strong, .big, .city { fill: #1c1c1c; }
.strong { font-size: 24px; }
.big { font-size: 27px; }
.city { font-size: 31px; font-weight: 600; }

.shields { fill: #fff; font-size: 20px; font-weight: bold; text-anchor: middle; }
.shields .dark { fill: #222; }

.popup {
  position: absolute;
  bottom: 628px;
  left: 50%;
  width: 870px;
  padding: 28px 35px 24px;
  border-radius: 10px;
  background: rgba(247, 247, 247, .85);
  box-shadow: 0 28px 120px rgba(20, 30, 0, .31);
  transform: translateX(-50%);
}

.popup::after {
  content: "";
  position: absolute;
  top: 100%;
  left: calc(50% - 33px);
  width: 66px;
  height: 36px;
  background: rgba(250, 250, 250, .9);
  clip-path: polygon(0 0, 100% 0, 50% 100%);
}

.popup .btn { height: 80px; }

.place {
  width: 620px;
  margin: 0 0 39px;
  font-size: 42px;
  line-height: 46px;
}

.coords {
  margin: 0 0 51px;
  font-size: 32px;
  line-height: 40px;
}

.close {
  position: absolute;
  top: 32px;
  right: 36px;
  width: 28px;
  height: 28px;
  padding: 0;
  border: 0;
  background: none;
}

.close svg { display: block; stroke: #bebfba; stroke-width: 7; }

.expand {
  position: absolute;
  top: 26px;
  left: 26px;
  width: 60px;
  height: 60px;
  padding: 10px;
  border: 2px solid #c4c4c4;
  border-radius: 9px;
  background: #fff;
}

.expand svg { display: block; fill: #333; }

.kind {
  position: absolute;
  top: 21px;
  right: 20px;
  width: 104px;
  height: 56px;
  padding: 0;
  border: 0;
  border-radius: 24px;
  background: rgba(252, 253, 248, .9);
}

.kind svg { display: block; width: 32px; margin: 0 auto; fill: #6c6d68; }

.credit {
  position: absolute;
  bottom: 13px;
  left: 18px;
  display: flex;
  align-items: center;
  color: #2e3328;
}

.apple { width: 31px; height: 31px; fill: currentColor; }

.brand {
  margin: 0 22px 0 1px;
  font-family: Inter, sans-serif;
  font-size: 37px;
  line-height: 42px;
}

.legal { padding-top: 4px; color: #333; font-size: 21px; }

.controls {
  position: absolute;
  right: 20px;
  bottom: 21px;
  display: flex;
  align-items: flex-end;
  gap: 21px;
}

.zoom {
  display: flex;
  width: 112px;
  border-radius: 28px;
  background: rgba(252, 253, 248, .9);
}

.zoom button {
  flex: 1;
  height: 56px;
  padding: 0 16px;
  border: 0;
  background: none;
}

.zoom svg { display: block; width: 24px; stroke: #70716a; stroke-width: 3; }

.compass {
  width: 111px;
  height: 111px;
  padding: 0;
  border: 0;
  border-radius: 50%;
  background: rgba(251, 252, 246, .95);
}

.compass svg { display: block; }
.compass text { fill: #6f706a; font-family: Inter, sans-serif; font-size: 36px; font-weight: 600; text-anchor: middle; }
```
